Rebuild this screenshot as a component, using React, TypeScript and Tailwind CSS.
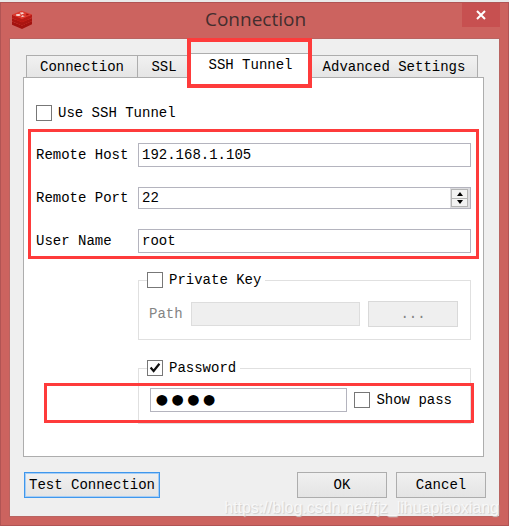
import React, { useState } from "react";

const fields = "h-6 min-w-0 border border-[#b4b4be] bg-white px-[3px] outline-none";
const button =
  "h-[26px] border border-[#adadad] bg-linear-to-b from-[#f0f0f0] to-[#e4e4e4]";

type CheckProps = {
  id: string;
  label: string;
  checked: boolean;
  onChange: (value: boolean) => void;
};

const Check = ({ id, label, checked, onChange }: CheckProps) => {
  return (
    <label htmlFor={id} className="flex h-4 shrink-0 items-center gap-1.5 leading-4">
      <span className="relative block size-4 shrink-0">
        <input
          id={id}
          type="checkbox"
          checked={checked}
          onChange={(e) => onChange(e.target.checked)}
          className="block size-4 appearance-none border border-[#777777] bg-white"
        />
        {checked && (
          <svg
            viewBox="0 0 16 16"
            className="pointer-events-none absolute inset-0 size-4"
            fill="none"
            stroke="#111111"
            strokeWidth="2.2"
          >
            <path d="M3.6 7.6 L6.6 11 L12.4 3.8" />
          </svg>
        )}
      </span>
      <span className="whitespace-nowrap">{label}</span>
    </label>
  );
};

const Logo = () => {
  return (
    <svg viewBox="0 0 22 20" className="h-5 w-[22px]">
      <path d="M1 11.5 L11 15.5 L21 11 V14.3 L11 19 L1 14.8 Z" fill="#a3120f" />
      <path d="M1 11.2 L11 7 L21 11 L11 15.6 Z" fill="#d22a22" />
      <path d="M1 8.3 L11 12.3 L21 8 V11 L11 15.4 L1 11.3 Z" fill="#ab1511" />
      <path d="M1 8 L11 4 L21 7.8 L11 12.3 Z" fill="#c8221b" />
      <path d="M1 4.8 L11 9 L21 4.6 V7.6 L11 12 L1 8 Z" fill="#b81a15" />
      <path d="M1 4.8 L10.5 0.8 L21 4.6 L11 9 Z" fill="#dc382c" />
      <path d="M9 2.2 L11 2.5 L12.5 1.9 L12 3 L13.6 3.6 L11.5 3.9 L10.6 4.8 L10 3.6 L8 3.4 L9.6 2.9 Z" fill="#f6dcda" />
      <ellipse cx="7.2" cy="5" rx="2.4" ry="1" fill="#f6dcda" />
      <path d="M10 7.3 L11.2 5.2 L13.8 6.2 Z" fill="#f6dcda" />
      <path d="M15.2 3.4 L18.2 4.5 L15.3 5.6 Z" fill="#a3120f" />
    </svg>
  );
};

const App = () => {
  const [useTunnel, setUseTunnel] = useState(false);
  const [useKey, setUseKey] = useState(false);
  const [usePassword, setUsePassword] = useState(true);
  const [showPass, setShowPass] = useState(false);
  const [host, setHost] = useState("192.168.1.105");
  const [port, setPort] = useState(22);
  const [user, setUser] = useState("root");
  const [pass, setPass] = useState("root");

  return (
    <div className="min-h-screen w-full bg-[#e9e9e9] pt-0.5 font-['Liberation_Mono',monospace] text-sm text-black">
      <div className="border border-[#b05454] bg-[#cc635f] px-2 pb-2">
        <header className="flex h-[35px] items-start">
          <div className="flex-1 pt-[7px] pl-0.5">
            <Logo />
          </div>
          <h1 className="pt-0.5 font-['Open_Sans',sans-serif] text-[19px] leading-7 text-[#432e2e]">
            Connection
          </h1>
          <div className="flex flex-1 justify-end">
            <button
              type="button"
              aria-label="Close"
              className="flex h-6 w-[38px] items-center justify-center bg-[#c75050]"
            >
              <svg viewBox="0 0 10 10" className="size-2.5" stroke="#ffffff" strokeWidth="2">
                <path d="M1 1 L9 9 M9 1 L1 9" />
              </svg>
            </button>
          </div>
        </header>

        <main className="relative border border-[#b96461] bg-[#efefef] pt-3.5 pr-[15px] pb-[18px] pl-[13px]">
          <div role="tablist" className="relative z-10 -mb-px ml-[3px] flex items-end">
            <button type="button" role="tab" className="h-[23px] w-28 border border-[#adadad] bg-linear-to-b from-[#f1f1f1] to-[#e5e5e5]">
              Connection
            </button>
            <button type="button" role="tab" className="h-[23px] w-[53px] border border-l-0 border-[#adadad] bg-linear-to-b from-[#f1f1f1] to-[#e5e5e5]">
              SSL
            </button>
            <div className="relative">
              <button type="button" role="tab" aria-selected="true" className="block h-[25px] w-[119px] border-t border-[#adadad] bg-white pb-0.5">
                SSH Tunnel
              </button>
              <div className="pointer-events-none absolute -top-[15px] -right-0.5 -bottom-2.5 -left-1 border-4 border-[#fe3b3b]" />
            </div>
            <button type="button" role="tab" className="h-[23px] w-42 border border-[#adadad] bg-linear-to-b from-[#f1f1f1] to-[#e5e5e5] whitespace-nowrap">
              Advanced Settings
            </button>
          </div>

          <section className="border border-[#adadad] bg-white px-3 pt-[27px] pb-8">
            <Check id="tunnel" label="Use SSH Tunnel" checked={useTunnel} onChange={setUseTunnel} />

            <div className="relative mt-[22px] flex flex-col gap-5">
              <div className="flex items-center">
                <label htmlFor="host" className="w-[102px] shrink-0">Remote Host</label>
                <input id="host" value={host} onChange={(e) => setHost(e.target.value)} className={`${fields} flex-1`} />
              </div>
              <div className="flex items-center">
                <label htmlFor="port" className="w-[102px] shrink-0">Remote Port</label>
                <div className="flex h-[22px] min-w-0 flex-1 border border-[#b4b4be] bg-white">
                  <input
                    id="port"
                    type="number"
                    value={port}
                    onChange={(e) => setPort(Number(e.target.value))}
                    className="min-w-0 flex-1 [appearance:textfield] px-[3px] outline-none [&::-webkit-inner-spin-button]:appearance-none"
                  />
                  <div className="flex w-5 flex-col bg-[#dcdcdf] py-px pr-0.5 pl-px">
                    <button type="button" aria-label="Increase" onClick={() => setPort(port + 1)} className="flex flex-1 items-center justify-center border border-[#b4b4b4] bg-[#f2f2f2]">
                      <svg viewBox="0 0 8 4" className="h-1 w-2"><path d="M4 0 L7 4 H1 Z" /></svg>
                    </button>
                    <button type="button" aria-label="Decrease" onClick={() => setPort(port - 1)} className="flex flex-1 items-center justify-center border border-t-0 border-[#b4b4b4] bg-[#f2f2f2]">
                      <svg viewBox="0 0 8 4" className="h-1 w-2"><path d="M1 0 H7 L4 4 Z" /></svg>
                    </button>
                  </div>
                </div>
              </div>
              <div className="flex items-center">
                <label htmlFor="user" className="w-[102px] shrink-0">User Name</label>
                <input id="user" value={user} onChange={(e) => setUser(e.target.value)} className={`${fields} flex-1`} />
              </div>
              <div className="pointer-events-none absolute -inset-x-2 -top-3.5 -bottom-1.5 border-3 border-[#fe3b3b]" />
            </div>

            <fieldset className="mt-[19px] ml-[102px] min-w-0 border border-[#e0e0e0] pr-3 pb-3 pl-2.5">
              <legend className="-ml-0.5 pr-1">
                <Check id="key" label="Private Key" checked={useKey} onChange={setUseKey} />
              </legend>
              <div className="flex items-center pt-[13px]">
                <label htmlFor="path" className="w-[42px] shrink-0 text-[#848484]">Path</label>
                <input id="path" disabled={!useKey} className="h-6 min-w-0 flex-1 border border-[#dddddd] bg-[#efefef] px-[3px]" />
                <button type="button" disabled={!useKey} className="ml-2 h-[26px] w-[90px] border border-[#d9d9d9] bg-[#efefef] text-[#848484]">
                  ...
                </button>
              </div>
            </fieldset>

            <div className="relative mt-5 ml-[102px]">
              <fieldset className="min-w-0 border border-[#e0e0e0] pr-[18px] pb-[11px] pl-[11px]">
                <legend className="-ml-[3px] pr-1">
                  <Check id="usepass" label="Password" checked={usePassword} onChange={setUsePassword} />
                </legend>
                <div className="flex items-center gap-[7px] pt-3">
                  <input
                    type={showPass ? "text" : "password"}
                    aria-label="Password"
                    value={pass}
                    onChange={(e) => setPass(e.target.value)}
                    className={`${fields} flex-1 ${showPass ? "" : "font-['Liberation_Serif',serif] text-[45px]"}`}
                  />
                  <Check id="show" label="Show pass" checked={showPass} onChange={setShowPass} />
                </div>
              </fieldset>
              <div className="pointer-events-none absolute -right-[3px] bottom-px -left-[94px] h-10 border-3 border-[#fe3b3b]" />
            </div>
          </section>

          <footer className="mt-[15px] flex gap-[9px] pl-px">
            <button type="button" className="mr-auto h-[26px] w-34 border border-[#3f97ec] bg-linear-to-b from-[#f0f0f0] to-[#e4e4e4] whitespace-nowrap ring-1 ring-[#a5cdf5] ring-inset">
              Test Connection
            </button>
            <button type="button" className={`${button} w-[90px]`}>OK</button>
            <button type="button" className={`${button} -mr-0.5 w-[90px]`}>Cancel</button>
          </footer>

          <p className="pointer-events-none absolute right-0 -bottom-0.5 font-['Liberation_Sans',sans-serif] text-base leading-5 text-[#f8f8f8] [text-shadow:1px_1px_1px_#cccccc]">
            https://blog.csdn.net/fjz_lihuapiaoxiang
          </p>
        </main>
      </div>
    </div>
  );
};

export default App;
